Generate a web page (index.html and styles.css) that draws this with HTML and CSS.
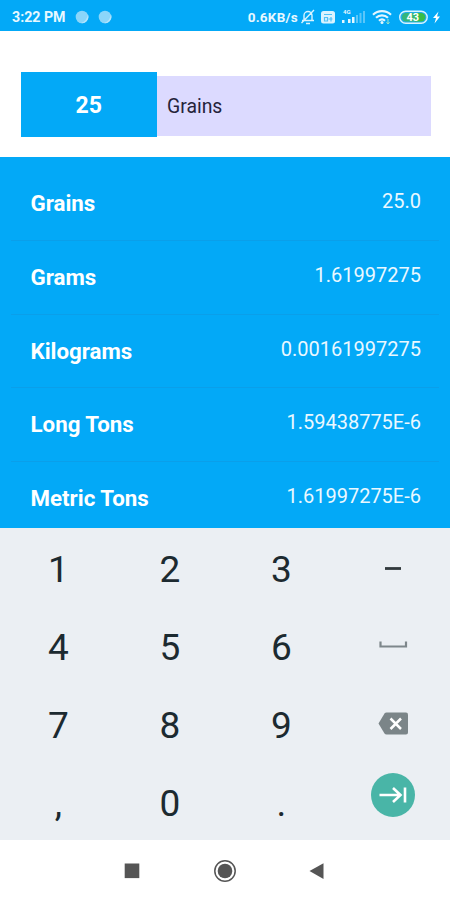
FILE: index.html
```html
<!DOCTYPE html>
<html lang="en">
  <head>
    <meta charset="utf-8" />
    <title>Weight Converter</title>
    <link rel="stylesheet" href="styles.css">
  </head>
  <body>
    <div class="status-bar">
      <span class="status-time">3:22 PM</span>
      <svg class="status-dots" width="38" height="14" viewBox="0 0 38 14">
        <circle cx="7" cy="7" r="6.3" fill="#8bd6fa" />
        <path d="M13 4.5A6.3 6.3 0 0 1 6 13Q12 11 13 4.5Z" fill="#b5e5fc" />
        <circle cx="30" cy="7" r="6.3" fill="#8bd6fa" />
        <path d="M36 4.5A6.3 6.3 0 0 1 29 13Q35 11 36 4.5Z" fill="#b5e5fc" />
      </svg>
      <span class="status-speed">0.6KB/s</span>
      <svg class="status-icons" width="144" height="20" viewBox="0 0 144 20">
        <!-- muted bell -->
        <g fill="none" stroke="#d9f3ff" stroke-width="1.4">
          <path d="M2 13.500h12M4 13V8.500a4 4 0 0 1 8 0V13M6 16.500h4M1.500 16 14 3" />
        </g>
        <!-- sim card -->
        <rect x="21" y="4" width="14" height="12.5" rx="2.5" fill="#d9f3ff" />
        <path d="M24 7.5h8M24.5 10.5h3v3.5h-3zM31 10v4.5M28.5 12h4" fill="none" stroke="#4fc1f7" stroke-width="1.2" />
        <!-- mobile signal -->
        <text x="43" y="7" class="network-label">4G</text>
        <g fill="#e3f6ff">
          <rect x="42" y="13" width="2.5" height="3" />
          <rect x="48" y="12" width="2.5" height="4" />
          <rect x="52" y="10" width="2.5" height="6" />
        </g>
        <g fill="#5bc6f9">
          <rect x="56" y="8" width="2" height="8" />
          <rect x="59.500" y="6" width="2" height="10" />
          <rect x="63" y="4" width="2" height="12" />
        </g>
        <!-- wifi -->
        <g fill="none" stroke="#e3f6ff" stroke-width="2.2">
          <path d="M73 7.7a13 13 0 0 1 18 0M76 10.8a8.8 8.8 0 0 1 12 0M79 13.7a4.5 4.5 0 0 1 6 0" />
        </g>
        <circle cx="82" cy="15.5" r="1.5" fill="#e3f6ff" />
        <path d="M88 12v5M86.5 15.2 88 17l1.500-1.800" fill="none" stroke="#9be6c9" stroke-width="1" />
        <!-- battery -->
        <rect x="99.700" y="4.200" width="27.500" height="12" rx="6" fill="#22aee6" stroke="#d9f3ff" stroke-width="1.400" />
        <path d="M102 10.200a4.200 4.200 0 0 1 4-4.200h10v8.400h-10a4.200 4.200 0 0 1-4-4.200z" fill="#35b67a" />
        <path d="M115 6h6a4.200 4.200 0 0 1 0 8.400h-6z" fill="#37bd48" />
        <text x="106.500" y="14" class="battery-label">43</text>
        <path d="M138.500 4.500 133 11h3l-1.500 5.500L140 9.500h-3z" fill="#fff" />
      </svg>
    </div>

    <div class="input-section">
      <div class="amount">25</div>
      <div class="unit">Grains</div>
    </div>

    <div class="results">
      <div class="result-row"><span class="result-name">Grains</span><span class="result-value">25.0</span></div>
      <div class="result-row"><span class="result-name">Grams</span><span class="result-value">1.61997275</span></div>
      <div class="result-row"><span class="result-name">Kilograms</span><span class="result-value">0.00161997275</span></div>
      <div class="result-row"><span class="result-name">Long Tons</span><span class="result-value">1.59438775E-6</span></div>
      <div class="result-row"><span class="result-name">Metric Tons</span><span class="result-value">1.61997275E-6</span></div>
    </div>

    <div class="keypad">
      <div class="key">1</div>
      <div class="key">2</div>
      <div class="key">3</div>
      <div class="key">
        <svg width="44" height="44" viewBox="0 0 44 44"><path d="M14 21.500h16" stroke="#32393d" stroke-width="2.800" /></svg>
      </div>
      <div class="key">4</div>
      <div class="key">5</div>
      <div class="key">6</div>
      <div class="key">
        <svg width="44" height="44" viewBox="0 0 44 44"><path d="M9.500 16.500v5h25.500v-5" fill="none" stroke="#7e878b" stroke-width="2.200" /></svg>
      </div>
      <div class="key">7</div>
      <div class="key">8</div>
      <div class="key">9</div>
      <div class="key">
        <svg width="44" height="44" viewBox="0 0 44 44">
          <path d="M15.500 9.500H35q2 0 2 2v18q0 2-2 2H15.500q-1.200 0-2-1L7.500 20.500l6-10q.8-1 2-1z" fill="#7b8588" />
          <path d="m19.500 15.500 10.500 10.500m0-10.500L19.500 26" stroke="#fff" stroke-width="2.500" />
        </svg>
      </div>
      <div class="key">,</div>
      <div class="key">0</div>
      <div class="key">.</div>
      <div class="key">
        <svg class="next-icon" width="44" height="44" viewBox="0 0 44 44">
          <circle cx="22" cy="22" r="22" fill="#49b5a7" />
          <path d="M8.500 22h20M22 15l7.500 7-7.500 7M34 14.500v15" fill="none" stroke="#fff" stroke-width="2.600" />
        </svg>
      </div>
    </div>

    <div class="nav-bar">
      <svg width="24" height="24" viewBox="0 0 24 24"><rect x="4.700" y="4.500" width="14.600" height="14.600" fill="#555" /></svg>
      <svg width="24" height="24" viewBox="0 0 24 24">
        <circle cx="12" cy="12" r="10.200" fill="none" stroke="#555" stroke-width="1.500" />
        <circle cx="12" cy="12" r="7.300" fill="#555" />
      </svg>
      <svg width="24" height="24" viewBox="0 0 24 24"><path d="M3.500 12 17.500 4.200v15.800z" fill="#555" /></svg>
    </div>
  </body>
</html>
```
FILE: styles.css
```css
* {
  box-sizing: border-box;
}

body {
  margin: 0;
  width: 450px;
  height: 900px;
  overflow: hidden;
  display: flex;
  flex-direction: column;
  background: #fff;
  font-family: Roboto, "Liberation Sans", sans-serif;
}

svg {
  display: block;
}

.status-bar {
  display: flex;
  align-items: center;
  height: 31px;
  padding: 2px 6px 0 12px;
  background: #03a9f7;
  color: #e8f8ff;
  font-size: 14px;
  font-weight: bold;
}

.status-time {
  width: 54px;
  font-size: 14.2px;
  white-space: nowrap;
}

.status-dots {
  margin-left: 9px;
}

.status-speed {
  margin-left: auto;
  margin-right: 2px;
  font-size: 13.5px;
  letter-spacing: 0.25px;
  white-space: nowrap;
}

.network-label {
  fill: #e3f6ff;
  font-size: 6px;
}

.battery-label {
  fill: #fff;
  font-size: 11px;
}

.input-section {
  display: flex;
  align-items: flex-end;
  height: 126px;
  padding: 0 19px 20px 20.500px;
}

.amount {
  width: 136.500px;
  height: 65px;
  line-height: 67px;
  background: #03a9f7;
  color: #fff;
  font-size: 23px;
  font-weight: bold;
  text-align: center;
}

.unit {
  flex: 1;
  height: 60px;
  margin-bottom: 1px;
  padding-left: 10px;
  line-height: 61px;
  background: #dcdaff;
  color: #25233a;
  font-size: 19.4px;
}

.results {
  height: 371px;
  padding: 10px 11px 0;
  overflow: hidden;
  background: #03a9f7;
}

.result-row {
  display: flex;
  justify-content: space-between;
  height: 73.8px;
  padding: 0 18px 0 19.500px;
  border-bottom: 1px solid #0a9fea;
  color: #fff;
}

.result-name {
  line-height: 73px;
  font-size: 22.300px;
  font-weight: bold;
}

.result-value {
  line-height: 69px;
  font-size: 20px;
  color: #eaf8ff;
}

.keypad {
  display: grid;
  grid-template-columns: repeat(4, 111.400px);
  grid-template-rows: repeat(4, 78px);
  height: 312px;
  padding-left: 2.800px;
  background: #ebeff3;
}

.key {
  display: flex;
  align-items: center;
  justify-content: center;
  height: 82px;
  color: #1c2a30;
  font-size: 37px;
}

.next-icon {
  margin-bottom: 16px;
}

.nav-bar {
  display: flex;
  justify-content: center;
  gap: 69px;
  height: 60px;
  padding-top: 19px;
}
```
